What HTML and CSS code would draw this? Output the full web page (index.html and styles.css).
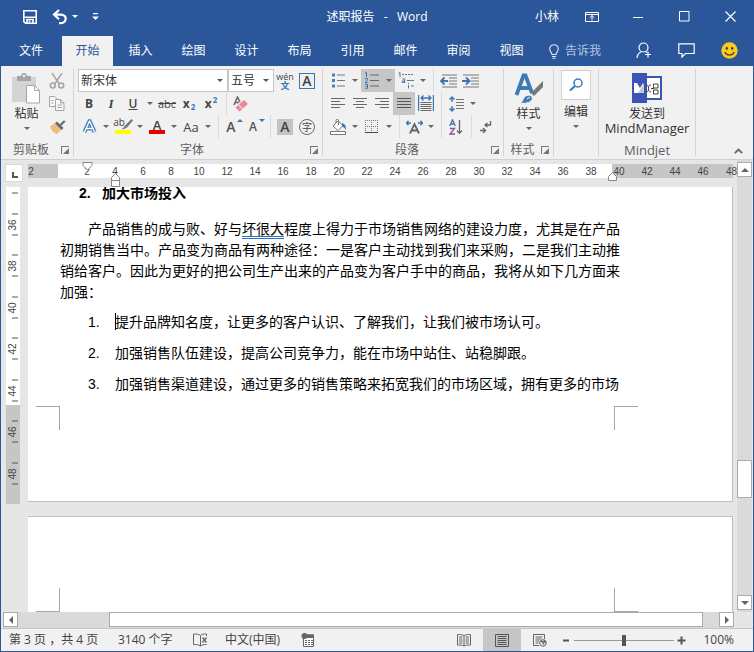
FILE: index.html
```html
<!DOCTYPE html>
<html lang="zh-CN">
<head>
<meta charset="utf-8">
<title>述职报告 - Word</title>
<link rel="stylesheet" href="styles.css">
</head>
<body>
<div class="window">
  <header class="titlebar">
    <div class="quick">
      <button class="qbtn" aria-label="保存"><svg width="16" height="16" viewBox="0 0 16 16" fill="none" stroke="#fff" stroke-width="1.6"><path d="M1.8 1.8h12.4v12.4H3.5L1.8 12.6z"/><path d="M2 8.2h12M5 14v-3.5h6V14" /><path d="M7.5 11.5v2"/></svg></button>
      <button class="qbtn" aria-label="撤消"><svg width="16" height="16" viewBox="0 0 16 16" fill="none" stroke="#fff" stroke-width="2.2"><path d="M7 1L2 5.500l5 4.700M2.500 5.600h6.300c7 0 6.600 9-1.800 8.600"/></svg></button>
      <button class="qarrow" aria-label="撤消选项"><i class="tri"></i></button>
      <button class="qmore" aria-label="自定义快速访问工具栏"><svg width="7" height="8" viewBox="0 0 7 8"><path d="M1 0h5v1.2H1zM0 3.5h7L3.5 7z" fill="#fff"/></svg></button>
    </div>
    <h1 class="doc-title">述职报告&nbsp;&nbsp; -&nbsp;&nbsp; Word</h1>
    <div class="wincontrols">
      <button class="user">小林</button>
      <button class="wbtn" aria-label="功能区显示选项"><svg width="14" height="12" viewBox="0 0 14 12" fill="none" stroke="#fff"><path d="M.5 1.5h13v9H.5zM.5 3.5h13M7 9.5v-5M4.8 6.8L7 4.6l2.2 2.2"/></svg></button>
      <button class="wbtn" aria-label="最小化"><svg width="10" height="10" viewBox="0 0 10 10" stroke="#fff"><path d="M0 5.5h10"/></svg></button>
      <button class="wbtn" aria-label="最大化"><svg width="11" height="11" viewBox="0 0 11 11" fill="none" stroke="#fff"><path d="M.5.5h9.500v9.500H.5z"/></svg></button>
      <button class="wbtn" aria-label="关闭"><svg width="11" height="11" viewBox="0 0 11 11" stroke="#fff" stroke-width="1.2"><path d="M.5.5l10 10M10.500.5l-10 10"/></svg></button>
    </div>
  </header>

  <nav class="tabs">
    <button class="tab file">文件</button>
    <button class="tab active">开始</button>
    <button class="tab">插入</button>
    <button class="tab">绘图</button>
    <button class="tab">设计</button>
    <button class="tab">布局</button>
    <button class="tab">引用</button>
    <button class="tab">邮件</button>
    <button class="tab">审阅</button>
    <button class="tab">视图</button>
    <button class="tellme"><svg width="10" height="15" viewBox="0 0 10 15" fill="none" stroke="#dbe5f5" stroke-width="1.1"><path d="M3 10.500c0-2-2.300-3-2.300-5.500a4.300 4.300 0 0 1 8.600 0c0 2.500-2.300 3.500-2.300 5.500zM3 12.500h4M3.500 14.300h3"/></svg>告诉我</button>
    <div class="tab-right">
      <button class="tbtn" aria-label="共享"><svg width="16" height="17" viewBox="0 0 16 17" fill="none" stroke="#fff" stroke-width="1.2"><circle cx="7.500" cy="5.500" r="4.500"/><path d="M1 16c.3-3.500 2-5.500 4.500-6.300M9.500 9.500l1.500 1M12 9.500v6M9 12.500h6"/></svg></button>
      <button class="tbtn" aria-label="批注"><svg width="17" height="15" viewBox="0 0 17 15" fill="none" stroke="#fff" stroke-width="1.2"><path d="M.8.8h15.400v9.700H7.500L4 14v-3.500H.8z"/></svg></button>
      <button class="tbtn" aria-label="反馈"><svg width="17" height="17" viewBox="0 0 17 17"><circle cx="8.500" cy="8.500" r="8.200" fill="#fbcb1d"/><ellipse cx="5.800" cy="6.300" rx="1.100" ry="1.500" fill="#3d3a2c"/><ellipse cx="11.200" cy="6.300" rx="1.100" ry="1.500" fill="#3d3a2c"/><path d="M3.800 10c1.500 4 7.900 4 9.400 0" fill="none" stroke="#3d3a2c" stroke-width="1.100"/></svg></button>
    </div>
  </nav>

  <section class="ribbon">
    <div class="group clipboard">
      <div class="group-body">
        <button class="big"><span class="big-icon"><svg width="30" height="31" viewBox="0 0 30 31"><path d="M0 4h24v25H0z" fill="#d5d3d5" /><path d="M5 3h4c0-4 6-4 6 0h4v5H5z" fill="#a5a3a5"/><circle cx="12" cy="3" r="1.300" fill="#f1f1f1"/><path d="M14.500 12.500h8l5 5v12.500h-13z" fill="#fff" stroke="#a9a4a9"/><path d="M22.500 12.500v5h5" fill="none" stroke="#a9a4a9"/></svg></span>粘贴<i class="tri"></i></button>
        <div class="col">
          <button class="ib" aria-label="剪切"><svg width="16" height="16" viewBox="0 0 16 16" fill="none" stroke="#a6a4a6" stroke-width="1.500"><path d="M3 0l7 10.500M13 0L6 10.500"/><circle cx="3.800" cy="12.500" r="2.500"/><circle cx="12.200" cy="12.500" r="2.500"/></svg></button>
          <button class="ib" aria-label="复制"><svg width="16" height="15" viewBox="0 0 16 15" fill="#f7f7f7" stroke="#a6a4a6"><path d="M.5.5h5l3 3v7h-8z"/><path d="M6.500 3.500h5l3.500 3.500v7.500H6.500zM11.500 3.500V7H15M8.500 9h4.500M8.500 11.500h4.500M2.500 4.500h2M2.500 7h2"/></svg></button>
          <button class="ib" aria-label="格式刷"><svg width="17" height="16" viewBox="0 0 17 16"><path d="M1 7.500L6 4l6 7-4 4c-3-.5-6-4-7-7.500z" fill="#efbe7d"/><path d="M6 4.500l2-2 6.500 6.500-2 2z" fill="#6b6b6b"/><path d="M10.500 5.500L15 1.200l1.500 1.600-4.500 4.200z" fill="#6b6b6b"/></svg></button>
        </div>
      </div>
      <footer class="group-label"><span>剪贴板</span><button class="launcher" aria-label="剪贴板选项"></button></footer>
    </div>

    <div class="group font">
      <div class="group-body rows">
        <div class="row">
          <label class="combo name"><select aria-label="字体名称"><option>新宋体</option></select><i class="tri"></i></label>
          <label class="combo size"><select aria-label="字号"><option>五号</option></select><i class="tri"></i></label>
          <button class="ib pinyin" aria-label="拼音指南"><span>wén</span><b>文</b></button>
          <button class="ib" aria-label="字符边框"><span class="boxed">A</span></button>
        </div>
        <div class="row">
          <button class="ib strong">B</button>
          <button class="ib ital">I</button>
          <button class="ib under">U</button><button class="ar" aria-label="下划线选项"><i class="tri"></i></button>
          <button class="ib strike">abc</button>
          <button class="ib script">x<sub>2</sub></button>
          <button class="ib script">x<sup>2</sup></button>
          <i class="sep"></i>
          <button class="ib" aria-label="清除格式"><svg width="16" height="16" viewBox="0 0 16 16"><path d="M1 9L4.500 1 7 6M2.500 6.500H6" fill="none" stroke="#666" stroke-width="1.500"/><path d="M2.500 11.500l8.500-7.500 4 4-8.500 7.500z" fill="#ef8699"/><path d="M5.500 8.800l4 4" stroke="#fff"/></svg></button>
        </div>
        <div class="row">
          <button class="ib" aria-label="文本效果"><svg width="15" height="15" viewBox="0 0 15 15" fill="none" stroke-linejoin="round"><path d="M2.500 13L7.500 2l5 11M4.500 9.500h6" stroke="#9dbde0" stroke-width="4.800"/><path d="M2.500 13L7.500 2l5 11M4.500 9.500h6" stroke="#3c74b4" stroke-width="3.200"/><path d="M2.500 13L7.500 2l5 11M4.500 9.500h6" stroke="#fff" stroke-width="1.400"/></svg></button><button class="ar" aria-label="文本效果选项"><i class="tri"></i></button>
          <button class="ib highlight" aria-label="突出显示"><span>ab</span><svg width="12" height="11" viewBox="0 0 12 11"><path d="M10.500 0L12 1.500 6 8.500l-3 1.500-2.500.5L3 8l1.500-2z" fill="#777"/></svg></button><button class="ar" aria-label="突出显示选项"><i class="tri"></i></button>
          <button class="ib fontcolor"><span>A</span></button><button class="ar" aria-label="字体颜色选项"><i class="tri"></i></button>
          <button class="ib case">Aa</button><button class="ar" aria-label="大小写选项"><i class="tri"></i></button>
          <i class="sep"></i>
          <button class="ib grow">A<i class="mini up"></i></button>
          <button class="ib shrink">A<i class="mini down"></i></button>
          <i class="sep"></i>
          <button class="ib"><span class="shade">A</span></button>
          <button class="ib"><span class="circled">字</span></button>
        </div>
      </div>
      <footer class="group-label"><span>字体</span><button class="launcher" aria-label="字体选项"></button></footer>
    </div>

    <div class="group para">
      <div class="group-body rows">
        <div class="row">
          <button class="ib" aria-label="项目符号"><svg width="15" height="15" viewBox="0 0 15 15"><path d="M1 .5h3v3H1zM1 6h3v3H1zM1 11.500h3v3H1z" fill="#4a7ebb"/><path d="M6 2h8M6 7.500h8M6 13h8" stroke="#777"/></svg></button><button class="ar" aria-label="项目符号选项"><i class="tri"></i></button>
          <button class="ib on" aria-label="编号"><svg width="16" height="17" viewBox="0 0 16 17"><path d="M1 1.500l1.500-1V5M1 6.500h2.300v2L1 10.500h2.600M1 12.300h2.500v4H1M1.500 14.300h2" fill="none" stroke="#4473ad" stroke-width="1"/><path d="M6 3h9M6 8.500h9M6 14h9" stroke="#666"/></svg></button><button class="ar on" aria-label="编号选项"><i class="tri"></i></button>
          <button class="ib" aria-label="多级列表"><svg width="17" height="17" viewBox="0 0 17 17"><path d="M.8 1.500l1.200-1V5M4.500 7h2.300v3.500H4.300V9h2.500M10.500 13v3.500M10.500 11v1" fill="none" stroke="#4473ad"/><path d="M4 2.500h2m1 0h2m1 0h2m1 0h2M9 8.500h7M13 14h3" stroke="#777"/></svg></button><button class="ar" aria-label="多级列表选项"><i class="tri"></i></button>
          <i class="sep"></i>
          <button class="ib" aria-label="减少缩进"><svg width="17" height="14" viewBox="0 0 17 14"><path d="M2 1h15M9 4h8M9 7h8M9 10h8M2 13h15" stroke="#777"/><path d="M4.500 3.500L1 7l3.500 3.500M1 7h7" fill="none" stroke="#3c74b4" stroke-width="1.800"/></svg></button>
          <button class="ib" aria-label="增加缩进"><svg width="17" height="14" viewBox="0 0 17 14"><path d="M1 1h16M9 4h8M9 7h8M9 10h8M1 13h16" stroke="#777"/><path d="M4 3.500L7.500 7 4 10.500M0 7h7" fill="none" stroke="#3c74b4" stroke-width="1.800"/></svg></button>
        </div>
        <div class="row">
          <button class="ib" aria-label="左对齐"><svg width="14" height="11" viewBox="0 0 14 11" stroke="#666"><path d="M0 .5h14M0 3.500h9M0 6.500h14M0 9.500h9"/></svg></button>
          <button class="ib" aria-label="居中"><svg width="14" height="11" viewBox="0 0 14 11" stroke="#666"><path d="M0 .5h14M3 3.500h8M0 6.500h14M3 9.500h8"/></svg></button>
          <button class="ib" aria-label="右对齐"><svg width="14" height="11" viewBox="0 0 14 11" stroke="#666"><path d="M0 .5h14M5 3.500h9M0 6.500h14M5 9.500h9"/></svg></button>
          <button class="ib on" aria-label="两端对齐"><svg width="14" height="11" viewBox="0 0 14 11" stroke="#555"><path d="M0 .5h14M0 3.500h14M0 6.500h14M0 9.500h14"/></svg></button>
          <button class="ib" aria-label="分散对齐"><svg width="16" height="17" viewBox="0 0 16 17" fill="none"><path d="M.6 0v16M15.400 0v16" stroke="#3c74b4" stroke-width="1.200"/><path d="M2.500 7.500h11M2.500 9.500h11M2.500 11.500h11M2.500 13.500h11M2.500 15.500h11" stroke="#666"/><path d="M3 3h10M5.500.5L3 3l2.500 2.500M10.500.5L13 3l-2.500 2.500" stroke="#3c74b4" stroke-width="1.300"/></svg></button>
          <i class="sep"></i>
          <button class="ib" aria-label="行距"><svg width="15" height="16" viewBox="0 0 15 16" fill="none"><path d="M3 1v5M.5 3.500L3 1l2.500 2.500M3 15v-5M.5 12.500L3 15l2.500-2.500" stroke="#3c74b4" stroke-width="1.400"/><path d="M7 3.500h8M7 6.500h8M7 9.500h8M7 12.500h8" stroke="#777"/></svg></button><button class="ar" aria-label="行距选项"><i class="tri"></i></button>
        </div>
        <div class="row">
          <button class="ib" aria-label="底纹"><svg width="17" height="16" viewBox="0 0 17 16"><path d="M3 7l5-5 5 4.500-5 5z" fill="#fff" stroke="#777"/><path d="M6 4V1.500c0-1.500 2.500-1.500 2.500 0V6" fill="none" stroke="#777"/><path d="M12 4c3 1 4.500 3 3.500 7-1-2.500-2-3-3.500-3.500z" fill="#3c74b4"/><path d="M.5 12.500h15v3H.5z" fill="#fff" stroke="#777"/></svg></button><button class="ar" aria-label="底纹选项"><i class="tri"></i></button>
          <button class="ib" aria-label="边框"><svg width="14" height="14" viewBox="0 0 14 14" fill="none" stroke="#777" stroke-dasharray="1 1"><path d="M0 .5h13M0 6.500h13M.5 0v12M6.500 0v12M12.500 0v12"/><path d="M0 12.500h13" stroke-dasharray="none" stroke="#444"/></svg></button><button class="ar" aria-label="边框选项"><i class="tri"></i></button>
          <i class="sep"></i>
          <button class="ib" aria-label="中文版式"><svg width="17" height="14" viewBox="0 0 17 14" fill="none"><path d="M4 13.500L8.500 4 13 13.500M5.500 10.500h6" stroke="#666" stroke-width="1.800"/><path d="M0 3h5M2.500.8L.5 3l2 2.200M17 3h-5M14.500.8l2 2.200-2 2.200" stroke="#3c74b4" stroke-width="1.300"/></svg></button><button class="ar" aria-label="中文版式选项"><i class="tri"></i></button>
          <i class="sep"></i>
          <button class="ib" aria-label="排序"><svg width="14" height="16" viewBox="0 0 14 16" fill="none"><path d="M.7 7L3.500.8 6.300 7M1.800 5h3.500" stroke="#3c74b4" stroke-width="1.300"/><path d="M1 9.500h4.500L1 15h5" stroke="#8a4f9e" stroke-width="1.300"/><path d="M10.500 1v13M8 11.500l2.500 2.800 2.500-2.800" stroke="#666" stroke-width="1.300"/></svg></button>
          <i class="sep"></i>
          <button class="ib" aria-label="显示编辑标记"><svg width="12" height="14" viewBox="0 0 12 14" fill="none" stroke="#666" stroke-width="1.300"><path d="M10.500 1v4H5.500M7.500 3L5 5l2.500 2M0 10.500h5M3 8l2.500 2.500L3 13"/></svg></button>
        </div>
      </div>
      <footer class="group-label"><span>段落</span><button class="launcher" aria-label="段落选项"></button></footer>
    </div>

    <div class="group styles">
      <div class="group-body">
        <button class="big"><span class="big-icon"><svg width="30" height="31" viewBox="0 0 30 31" fill="none"><path d="M2.500 22L9.500 2.500h2L18 20M5 15h11" stroke="#3f79b7" stroke-width="3.800"/><path d="M29 8v6l-9 9-3-3z" fill="#777"/><path d="M6 30c4-1 2-6 7-7.500 4-1 6 1.500 5 4C16.500 30 10 31 6 30z" fill="#3f79b7" stroke="#f1f1f1"/><path d="M13 26l3-2" stroke="#fff"/></svg></span>样式<i class="tri"></i></button>
      </div>
      <footer class="group-label"><span>样式</span><button class="launcher" aria-label="样式选项"></button></footer>
    </div>

    <div class="group edit">
      <div class="group-body">
        <button class="big"><span class="big-icon framed"><svg width="15" height="14" viewBox="0 0 15 14" fill="none" stroke="#3f79b7"><circle cx="9" cy="5" r="4" stroke-width="1.500"/><path d="M6 8l-5 4.500" stroke-width="2.200"/></svg></span>编辑<i class="tri"></i></button>
      </div>
    </div>

    <div class="group mind">
      <div class="group-body">
        <button class="big"><span class="big-icon"><svg width="30" height="30" viewBox="0 0 30 30"><path d="M0 0h15v3h15v24H15v3H0z" fill="#3b55b5"/><path d="M15 5h13v20H15z" fill="#fff"/><path d="M2 10h3l3 5 3-5v10H2z" fill="#fff"/><path d="M12 10l-6 10h6z" fill="#c9c9d2"/><path d="M14 12c5 0 0 7 5 7M14 19c5 0 0-7 5-7M19 15.500h3" fill="none" stroke="#444"/><path d="M21.500 11h4.500v4h-4.500zM21.500 17h4.500v4h-4.500z" fill="none" stroke="#444"/></svg></span>发送到<span class="latin">MindManager</span></button>
      </div>
      <footer class="group-label"><span class="latin">Mindjet</span></footer>
    </div>
    <button class="collapse" aria-label="折叠功能区"><svg width="9" height="6" viewBox="0 0 9 6" fill="none" stroke="#666" stroke-width="1.800"><path d="M.8 5.200L4.500 1.500l3.700 3.700"/></svg></button>
  </section>

  <main class="work">
    <div class="corner"><i class="tabstop"></i></div>
    <div class="hruler">
      <div class="hscale">
        <span>2</span><span></span><span>2</span><span>4</span><span>6</span><span>8</span><span>10</span><span>12</span><span>14</span><span>16</span><span>18</span><span>20</span><span>22</span><span>24</span><span>26</span><span>28</span><span>30</span><span>32</span><span>34</span><span>36</span><span>38</span><span>40</span><span>42</span><span>44</span><span>46</span><span>48</span>
      </div>
      <svg class="mark first" width="11" height="9" viewBox="0 0 11 9"><path d="M1 .5h9v3L5.500 8 1 3.500z" fill="#fff" stroke="#888"/></svg>
      <svg class="mark hang" width="9" height="14" viewBox="0 0 9 14"><path d="M.5 13.500v-9l4-4 4 4v9zM.5 7.500h8" fill="#fff" stroke="#888"/></svg>
      <svg class="mark right" width="9" height="9" viewBox="0 0 9 9"><path d="M.5 8.500v-4l4-4 4 4v4z" fill="#fff" stroke="#888"/></svg>
    </div>
    <div class="vruler">
      <div class="vscale"><span></span><span>36</span><span>38</span><span>40</span><span>42</span><span>44</span><span>46</span><span>48</span></div>
    </div>
    <div class="canvas">
      <article class="page">
        <h2 class="item heading"><span>2.</span><span>加大市场投入</span></h2>
        <p class="body">产品销售的成与败、好与<span class="grammar">坏很大</span>程度上得力于市场销售网络的建设力度，尤其是在产品初期销售当中。产品变为商品有两种途径：一是客户主动找到我们来采购，二是我们主动推销给客户。因此为更好的把公司生产出来的产品变为客户手中的商品，我将从如下几方面来加强：</p>
        <div class="list">
          <div class="item"><span>1.</span><span class="caret">提升品牌知名度，让更多的客户认识、了解我们，让我们被市场认可。</span></div>
          <div class="item"><span>2.</span><span>加强销售队伍建设，提高公司竞争力，能在市场中站住、站稳脚跟。</span></div>
          <div class="item"><span>3.</span><span>加强销售渠道建设，通过更多的销售策略来拓宽我们的市场区域，拥有更多的市场</span></div>
        </div>
        <div class="crops end"><i></i><i></i></div>
      </article>
      <article class="page next">
        <div class="crops start"><i></i><i></i></div>
      </article>
    </div>
    <div class="vscroll">
      <button class="sbtn" aria-label="向上滚动"><i class="tri up"></i></button>
      <div class="vtrack"><i class="vthumb"></i></div>
      <button class="sbtn" aria-label="向下滚动"><i class="tri"></i></button>
    </div>
    <div class="hscroll">
      <button class="sbtn" aria-label="向左滚动"><i class="tri left"></i></button>
      <div class="htrack"><i class="hthumb"></i></div>
      <button class="sbtn" aria-label="向右滚动"><i class="tri rightward"></i></button>
    </div>
  </main>

  <footer class="status">
    <span class="pages">第 3 页 ，共 4 页</span>
    <span class="words">3140 个字</span>
    <button class="sicon" aria-label="校对"><svg width="15" height="14" viewBox="0 0 15 14" fill="none" stroke="#666"><path d="M7.500 2.500C5.500 1 3 1 .5 1v10.500c2.500 0 5 0 7 1.500zM7.500 2.500C9 1 11 1 13.500 1v2M7.500 13c1-1 3-1.500 6-1.500"/><path d="M9.500 4.500l4 5M13.500 4.500l-4 5" stroke-width="1.400"/></svg></button>
    <span class="lang">中文(中国)</span>
    <button class="sicon" aria-label="宏"><svg width="14" height="14" viewBox="0 0 14 14"><path d="M2.500 5v8.500h10V2H6" fill="#fff" stroke="#666"/><path d="M6 1.500h7V5H6z" fill="#666"/><circle cx="3.500" cy="3" r="3" fill="#666"/><path d="M4 7.500h2m1 0h2m1 0h2M4 9.500h2m1 0h2m1 0h2M4 11.500h2m1 0h2m1 0h2" stroke="#666"/></svg></button>
    <div class="views">
      <button class="view" aria-label="阅读视图"><svg width="14" height="13" viewBox="0 0 14 13" fill="none" stroke="#666"><path d="M7 1.500C5 .5 3 .5.5.5v10.500c2.500 0 4.500 0 6.500 1 2-1 4-1 6.500-1V.5C11 .5 9 .5 7 1.500zV12M2 3h3.500M2 5h3.500M2 7h3.500M2 9h3.500M8.500 3H12M8.500 5H12M8.500 7H12M8.500 9H12"/></svg></button>
      <button class="view on" aria-label="页面视图"><svg width="14" height="13" viewBox="0 0 14 13" fill="none" stroke="#555"><path d="M.5.5h13v12H.5zM2.500 2.500h9M2.500 4.500h9M2.500 6.500h9M2.500 8.500h9M2.500 10.500h9"/></svg></button>
      <button class="view" aria-label="Web 版式视图"><svg width="14" height="13" viewBox="0 0 14 13" fill="none" stroke="#666"><path d="M6 11.500H.5V.5h11V5M2.500 3h7M2.500 5h6M2.500 7h4M2.500 9h3"/><circle cx="10" cy="9" r="3.300" fill="#f1f1f1"/><path d="M8 7l2 1 .5 2.500M11 6.500L12.500 9" stroke-width="1.500"/></svg></button>
    </div>
    <div class="zoom">
      <button class="zbtn" aria-label="缩小"><svg width="7" height="9" viewBox="0 0 7 9"><path d="M0 4.500h6" stroke="#555" stroke-width="2"/></svg></button>
      <input type="range" min="0" max="100" value="50" aria-label="显示比例">
      <button class="zbtn" aria-label="放大"><svg width="9" height="9" viewBox="0 0 9 9"><path d="M.5 4.500h8M4.500.5v8" stroke="#555" stroke-width="2"/></svg></button>
      <span class="pct">100%</span>
    </div>
  </footer>
</div>
</body>
</html>
```
FILE: styles.css
```css
* { box-sizing: border-box; }
body {
  margin: 0;
  font: 12px/16px "Open Sans", "Noto Sans CJK SC", sans-serif;
  color: #444;
}
button {
  display: flex;
  align-items: center;
  justify-content: center;
  margin: 0;
  padding: 0;
  border: 0;
  background: none;
  font: inherit;
  color: inherit;
  flex: none;
}
svg { display: block; flex: none; }
i { font-style: normal; }

.window {
  display: flex;
  flex-direction: column;
  height: 100vh;
  border: 1px solid #2b579a;
  border-top: 0;
  background: #e6e6e6;
  overflow: hidden;
}

.tri {
  display: block;
  border: 3px solid transparent;
  border-top-color: currentColor;
  border-bottom-width: 0;
}
.tri.up { border: 4px solid transparent; border-bottom-color: currentColor; border-top-width: 0; }
.tri.left { border: 4px solid transparent; border-right-color: currentColor; border-left-width: 0; }
.tri.rightward { border: 4px solid transparent; border-left-color: currentColor; border-right-width: 0; }

/* title bar */
.titlebar {
  display: grid;
  grid-template-columns: 1fr auto 1fr;
  align-items: center;
  height: 36px;
  padding-bottom: 3px;
  background: #2b579a;
  color: #fff;
}
.quick { display: flex; align-items: center; padding-left: 14px; }
.qbtn { width: 30px; height: 30px; }
.qarrow { width: 0; height: 30px; }
.qmore { width: 40px; height: 30px; }
.doc-title { margin: 0; font-size: 12px; font-weight: 400; }
.wincontrols { display: flex; justify-content: flex-end; }
.user { width: 44px; }
.wbtn { width: 46px; height: 32px; }

/* ribbon tabs */
.tabs { display: flex; height: 30px; background: #2b579a; color: #fff; }
.tab { width: 51px; margin: 0 1px; }
.tab.file { width: 58px; }
.tab.active { background: #f1f1f1; color: #2b579a; }
.tellme { gap: 6px; padding-left: 11px; color: #b4c5e1; }
.tab-right { display: flex; margin-left: auto; padding-right: 2px; }
.tbtn { width: 43px; padding-bottom: 2px; }

/* ribbon */
.ribbon {
  display: flex;
  flex: none;
  height: 94px;
  padding-top: 3px;
  background: #f1f1f1;
  border-bottom: 1px solid #cfcfcf;
}
.group {
  display: flex;
  flex-direction: column;
  margin-bottom: 3px;
  border-right: 1px solid #d4d4d4;
}
.group-body { display: flex; height: 69px; }
.rows { flex-direction: column; padding-left: 4px; }
.row { display: flex; height: 23px; }
.group-label {
  display: flex;
  align-items: center;
  flex: 1;
  height: 18px;
  padding-top: 5px;
  color: #5e5e5e;
}
.group-label span { flex: 1; text-align: center; }
.launcher {
  position: relative;
  width: 8px;
  height: 8px;
  margin-right: 4px;
  border-top: 1px solid #777;
  border-left: 1px solid #777;
}
.launcher::after {
  content: "";
  position: absolute;
  right: 0;
  bottom: 0;
  border: 3px solid #777;
  border-top-color: transparent;
  border-left-color: transparent;
}
.clipboard { width: 73px; }
.font { width: 249px; }
.para { width: 181px; }
.styles { width: 50px; }
.edit { width: 45px; }
.mind { width: 97px; }
.latin { font-size: 13px; }

.big {
  flex-direction: column;
  justify-content: flex-start;
  flex: 1;
  padding-top: 4px;
  color: #333;
}
.big-icon { display: flex; height: 31px; margin-bottom: 2px; align-items: flex-start; }
.big .tri { margin-top: 5px; color: #666; }
.framed { width: 30px; height: 30px; align-items: center; justify-content: center; background: #fff; border: 1px solid #d0d0d0; }
.edit .big { padding-top: 1px; }
.edit .big-icon { margin-bottom: 4px; height: 30px; }
.mind .big { line-height: 15px; }
.clipboard .big { padding-left: 6px; }
.col { width: 27px; }
.ib { position: relative; width: 22px; height: 23px; }
.ar { width: 12px; height: 23px; color: #666; }
.on { background: #c6c6c6; }
.sep { width: 1px; margin: 0 3px 0 4px; background: #dadada; }

.combo {
  display: flex;
  align-items: center;
  height: 23px;
  padding-right: 4px;
  background: #fff;
  border: 1px solid #c6c6c6;
  color: #555;
}
.combo select {
  flex: 1;
  min-width: 0;
  padding: 0 0 0 2px;
  border: 0;
  appearance: none;
  background: none;
  font: inherit;
  color: #333;
}
.name { width: 150px; }
.size { width: 46px; }
.pinyin { flex-direction: column; line-height: 9px; font-size: 9px; }
.pinyin b { color: #3c74b4; line-height: 9px; }
.boxed, .shade {
  width: 16px;
  height: 16px;
  border: 1px solid #3c74b4;
  font-weight: 600;
  font-size: 14px;
  line-height: 14px;
}
.shade { background: #c3c3c3; border: 0; line-height: 16px; }
.circled { width: 16px; height: 16px; border: 1px solid #666; border-radius: 50%; font-size: 10px; line-height: 14px; }
.strong { font-weight: 700; }
.ital { font: italic 700 13px "Liberation Serif", serif; }
.under { font-weight: 600; text-decoration: underline; }
.strike { font-size: 11px; text-decoration: line-through; }
.script { font-weight: 700; gap: 1px; }
.script sub, .script sup { font-size: 8px; line-height: 8px; color: #3c74b4; }
.script sub { align-self: flex-end; margin-bottom: 4px; }
.script sup { align-self: flex-start; margin-top: 4px; }
.highlight { align-items: flex-start; border-bottom: 4px solid #ff0; height: 17px; width: 16px; margin: 2px 3px 4px; font-size: 10px; line-height: 10px; }
.highlight svg { margin: 2px 0 0 -4px; }
.fontcolor { height: 15px; width: 16px; margin: 4px 3px; border-bottom: 4px solid #e80000; font-weight: 600; font-size: 13px; line-height: 12px; }
.case { font-size: 13px; }
.grow, .shrink { font-weight: 600; font-size: 14px; padding-right: 4px; color: #555; }
.shrink { font-size: 12px; }
.mini { position: absolute; right: 1px; top: 4px; border: 3px solid transparent; }
.mini.up { border-bottom: 3px solid #3c74b4; border-top: 0; }
.mini.down { border-top: 3px solid #3c74b4; border-bottom: 0; }
.collapse { margin-left: auto; align-self: flex-end; width: 29px; height: 16px; }

/* work area */
.work {
  display: grid;
  flex: 1;
  min-height: 0;
  grid-template-columns: 27px minmax(0, 1fr) 16px;
  grid-template-rows: 27px minmax(0, 1fr) 16px;
}
.corner {
  width: 18px;
  height: 18px;
  margin: 4px 0 0 4px;
  background: #fff;
  border: 1px solid #d9d9d9;
}
.tabstop { display: block; width: 6px; height: 6px; margin: 7px 0 0 6px; border: solid #555; border-width: 0 0 2px 2px; }
.hruler { position: relative; }
.hscale {
  display: flex;
  height: 14px;
  margin-top: 4px;
  overflow: hidden;
  background: linear-gradient(90deg, #c6c6c6 30px, #fff 30px, #fff 584px, #c6c6c6 584px) no-repeat 0 0 / calc(100% - 4px) 100%;
  font: 10px/15px "Liberation Sans", sans-serif;
}
.hscale span { flex: 0 0 28px; text-align: center; }
.hscale span:first-child { margin-left: -11px; }
.hscale span:last-child { flex-basis: 20px; text-align: right; }
.mark { position: absolute; }
.mark.first { left: 54px; top: 2px; }
.mark.hang { left: 83px; top: 13px; }
.mark.right { left: 580px; top: 12px; }
.vruler {
  width: 14px;
  height: 317px;
  margin-left: 5px;
  overflow: hidden;
  background: linear-gradient(#fff 218px, #c6c6c6 218px);
}
.vscale { display: flex; flex-direction: column; height: 332px; margin-top: -25px; }
.vscale span {
  position: relative;
  display: flex;
  flex: 1;
  align-items: center;
  justify-content: center;
  writing-mode: vertical-rl;
  rotate: 180deg;
  font: 10px/14px "Liberation Sans", sans-serif;
}
.vscale span::before, .vscale span::after {
  content: "";
  position: absolute;
  left: 2px;
  width: 6px;
  height: 1px;
  background: #555;
}
.vscale span::before { top: 10px; }
.vscale span::after { bottom: 10px; }

.canvas {
  min-height: 0;
  margin-right: 4px;
  overflow: hidden;
  color: #000;
  font: 14px/21px "Liberation Sans", "Noto Sans CJK SC", sans-serif;
}
.page { height: 315px; padding: 0 110px 0 32px; background: #fff; border: solid #bfbfbf; border-width: 0 1px 1px 0; }
.page.next { margin-top: 14px; padding-top: 71px; border-top-width: 1px; }
.item { display: grid; grid-template-columns: 27px 1fr; margin: 0 0 0 28px; font-weight: 400; white-space: nowrap; }
.heading { grid-template-columns: 23px 1fr; margin: 0 0 0 19px; line-height: 12px; font-size: 14px; font-weight: 700; }
.body { margin: 20px 0 9px; text-indent: 2em; }
.list { display: grid; gap: 10px; }
.grammar { text-decoration: underline double #2f6fc1 1px; text-decoration-skip-ink: none; text-underline-offset: 2px; }
.caret { position: relative; }
.caret::before { content: ""; position: absolute; left: 0; top: 1px; width: 1px; height: 17px; background: #000; }
.crops { display: flex; justify-content: space-between; margin: 11px -16px 0 -24px; }
.crops i { width: 24px; height: 24px; border: 0 solid #a6a6a6; }
.crops.end i { border-top-width: 1px; }
.crops.start i { border-bottom-width: 1px; }
.crops.start { margin-top: 0; }
.crops i:first-child { border-right-width: 1px; }
.crops i:last-child { border-left-width: 1px; }

.sbtn { width: 15px; height: 15px; background: #fff; border: 1px solid #ababab; color: #666; }
.sbtn .tri:not(.up, .left, .rightward) { border-width: 4px 4px 0; }
.vscroll { grid-column: 3; grid-row: 1 / 3; display: flex; flex-direction: column; width: 15px; padding: 2px 0; background: #dadada; }
.vtrack { flex: 1; display: flex; flex-direction: column; }
.vthumb { height: 9%; margin-top: auto; margin-bottom: 97px; background: #fff; border: 1px solid #ababab; }
.hscroll { grid-column: 1 / 3; display: flex; margin: 0 3px 0 2px; background: #dadada; }
.htrack { flex: 1; display: flex; padding: 0 16px 0 91px; }
.hthumb { flex: 1; height: 15px; background: #fff; border: 1px solid #ababab; }

/* status bar */
.status {
  display: flex;
  align-items: center;
  flex: none;
  height: 23px;
  padding: 0 19px 0 8px;
  background: #f1f1f1;
  border-top: 1px solid #c6c6c6;
  white-space: pre;
}
.pages { width: 109px; }
.words { width: 75px; }
.sicon { width: 15px; margin-right: 17px; }
.lang { width: 75px; }
.views { display: flex; align-self: stretch; margin-left: auto; }
.view { width: 38px; }
.zoom { display: flex; align-items: center; }
.zbtn { width: 15px; height: 20px; }
.zoom input { width: 100px; height: 14px; margin: 0; appearance: none; background: linear-gradient(#999, #999) center / 100% 1px no-repeat; }
.zoom input::-webkit-slider-thumb { appearance: none; width: 4px; height: 11px; background: #555; }
.pct { width: 45px; text-align: right; }
```
